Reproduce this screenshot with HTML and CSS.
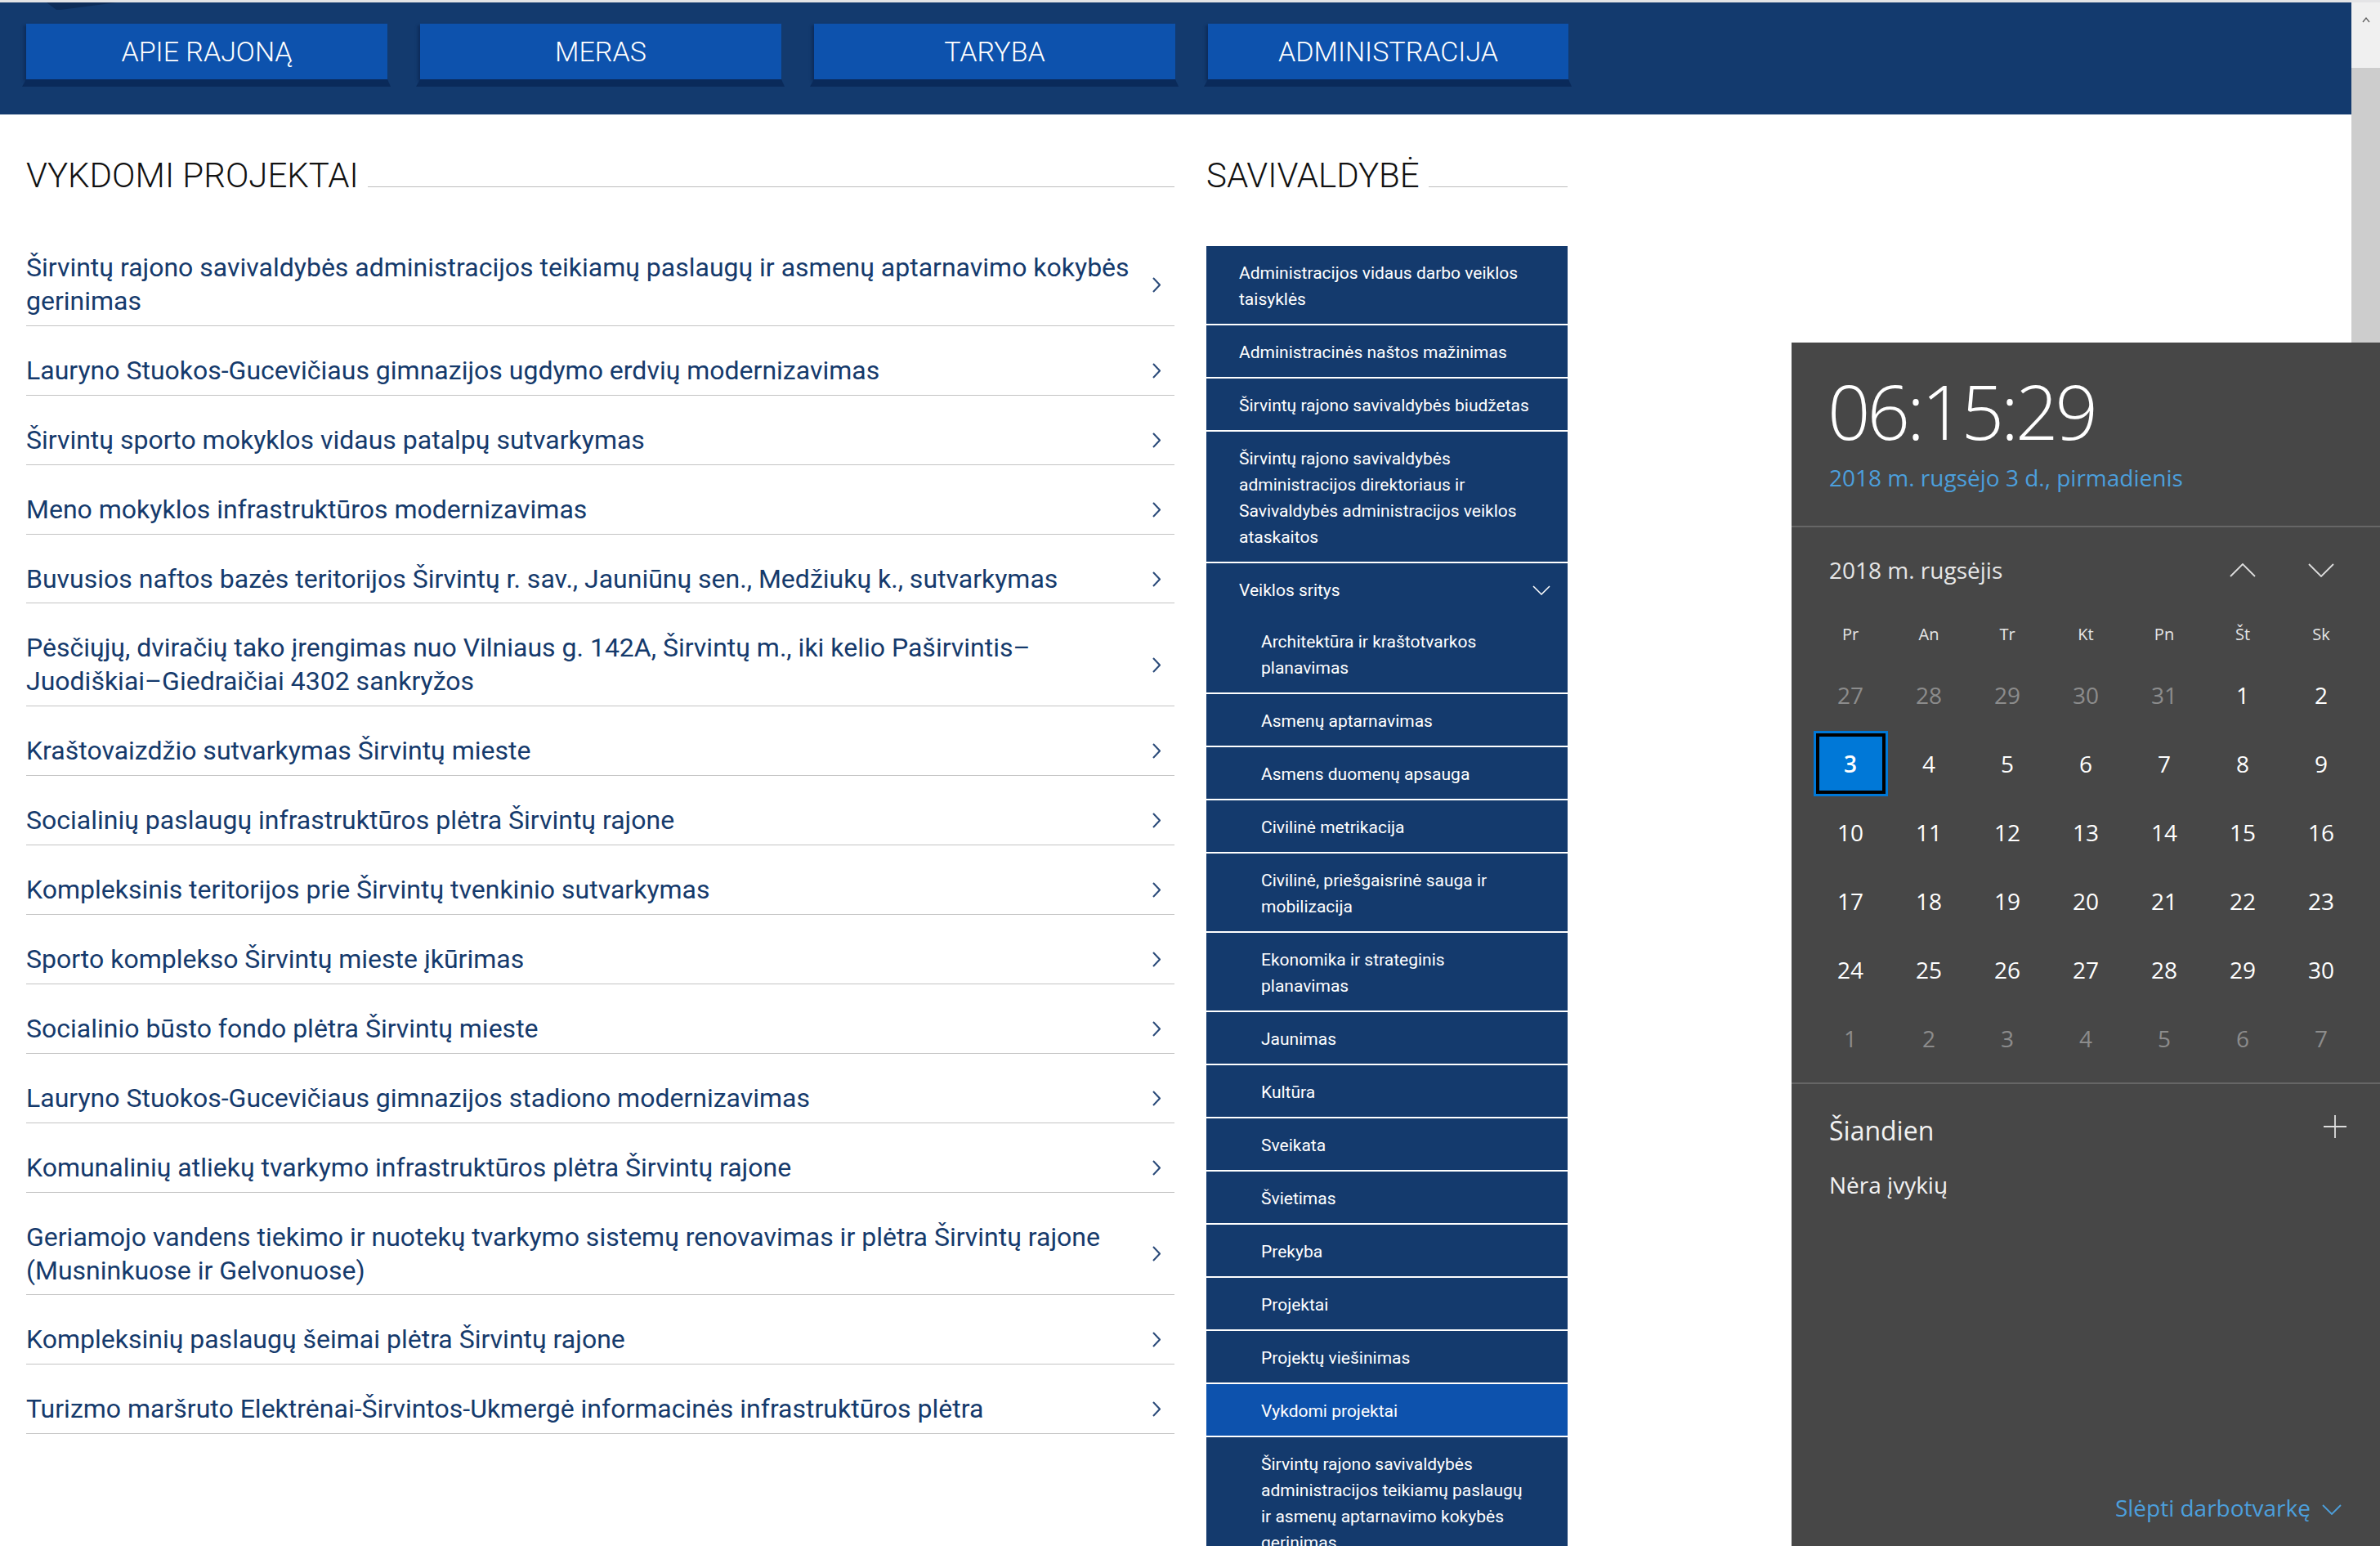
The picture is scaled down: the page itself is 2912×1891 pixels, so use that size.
FILE: index.html
```html
<!DOCTYPE html>
<html lang="lt">
<head>
<meta charset="utf-8">
<title>Vykdomi projektai</title>
<link rel="stylesheet" href="styles.css">
</head>
<body>
<div class="window">
  <div class="topstrip"></div>
  <div class="frame">
    <div class="page">
      <header class="navbar">
        <span class="logo-shadow"></span>
        <nav class="nav">
          <a class="navbtn" href="#">APIE RAJONĄ</a>
          <a class="navbtn" href="#">MERAS</a>
          <a class="navbtn" href="#">TARYBA</a>
          <a class="navbtn last" href="#">ADMINISTRACIJA</a>
        </nav>
      </header>
      <main class="content">
        <section class="projects">
          <h2 class="heading"><span>VYKDOMI PROJEKTAI</span><i class="rule"></i></h2>
          <ul class="plist">
            <li><a class="prow" href="#"><span class="ptext">Širvintų rajono savivaldybės administracijos teikiamų paslaugų ir asmenų aptarnavimo kokybės gerinimas</span><svg class="chev" viewBox="0 0 10 19"><polyline points="1,1 9,9.5 1,18"/></svg></a></li>
            <li><a class="prow" href="#"><span class="ptext">Lauryno Stuokos-Gucevičiaus gimnazijos ugdymo erdvių modernizavimas</span><svg class="chev" viewBox="0 0 10 19"><polyline points="1,1 9,9.5 1,18"/></svg></a></li>
            <li><a class="prow" href="#"><span class="ptext">Širvintų sporto mokyklos vidaus patalpų sutvarkymas</span><svg class="chev" viewBox="0 0 10 19"><polyline points="1,1 9,9.5 1,18"/></svg></a></li>
            <li><a class="prow" href="#"><span class="ptext">Meno mokyklos infrastruktūros modernizavimas</span><svg class="chev" viewBox="0 0 10 19"><polyline points="1,1 9,9.5 1,18"/></svg></a></li>
            <li><a class="prow" href="#"><span class="ptext">Buvusios naftos bazės teritorijos Širvintų r. sav., Jauniūnų sen., Medžiukų k., sutvarkymas</span><svg class="chev" viewBox="0 0 10 19"><polyline points="1,1 9,9.5 1,18"/></svg></a></li>
            <li><a class="prow" href="#"><span class="ptext">Pėsčiųjų, dviračių tako įrengimas nuo Vilniaus g. 142A, Širvintų m., iki kelio Paširvintis–Juodiškiai–Giedraičiai 4302 sankryžos</span><svg class="chev" viewBox="0 0 10 19"><polyline points="1,1 9,9.5 1,18"/></svg></a></li>
            <li><a class="prow" href="#"><span class="ptext">Kraštovaizdžio sutvarkymas Širvintų mieste</span><svg class="chev" viewBox="0 0 10 19"><polyline points="1,1 9,9.5 1,18"/></svg></a></li>
            <li><a class="prow" href="#"><span class="ptext">Socialinių paslaugų infrastruktūros plėtra Širvintų rajone</span><svg class="chev" viewBox="0 0 10 19"><polyline points="1,1 9,9.5 1,18"/></svg></a></li>
            <li><a class="prow" href="#"><span class="ptext">Kompleksinis teritorijos prie Širvintų tvenkinio sutvarkymas</span><svg class="chev" viewBox="0 0 10 19"><polyline points="1,1 9,9.5 1,18"/></svg></a></li>
            <li><a class="prow" href="#"><span class="ptext">Sporto komplekso Širvintų mieste įkūrimas</span><svg class="chev" viewBox="0 0 10 19"><polyline points="1,1 9,9.5 1,18"/></svg></a></li>
            <li><a class="prow" href="#"><span class="ptext">Socialinio būsto fondo plėtra Širvintų mieste</span><svg class="chev" viewBox="0 0 10 19"><polyline points="1,1 9,9.5 1,18"/></svg></a></li>
            <li><a class="prow" href="#"><span class="ptext">Lauryno Stuokos-Gucevičiaus gimnazijos stadiono modernizavimas</span><svg class="chev" viewBox="0 0 10 19"><polyline points="1,1 9,9.5 1,18"/></svg></a></li>
            <li><a class="prow" href="#"><span class="ptext">Komunalinių atliekų tvarkymo infrastruktūros plėtra Širvintų rajone</span><svg class="chev" viewBox="0 0 10 19"><polyline points="1,1 9,9.5 1,18"/></svg></a></li>
            <li><a class="prow" href="#"><span class="ptext">Geriamojo vandens tiekimo ir nuotekų tvarkymo sistemų renovavimas ir plėtra Širvintų rajone (Musninkuose ir Gelvonuose)</span><svg class="chev" viewBox="0 0 10 19"><polyline points="1,1 9,9.5 1,18"/></svg></a></li>
            <li><a class="prow" href="#"><span class="ptext">Kompleksinių paslaugų šeimai plėtra Širvintų rajone</span><svg class="chev" viewBox="0 0 10 19"><polyline points="1,1 9,9.5 1,18"/></svg></a></li>
            <li><a class="prow" href="#"><span class="ptext">Turizmo maršruto Elektrėnai-Širvintos-Ukmergė informacinės infrastruktūros plėtra</span><svg class="chev" viewBox="0 0 10 19"><polyline points="1,1 9,9.5 1,18"/></svg></a></li>
          </ul>
        </section>
        <aside class="side">
          <h2 class="heading"><span>SAVIVALDYBĖ</span><i class="rule"></i></h2>
          <ul class="smenu">
            <li><a class="sitem" href="#">Administracijos vidaus darbo veiklos taisyklės</a></li>
            <li><a class="sitem" href="#">Administracinės naštos mažinimas</a></li>
            <li><a class="sitem" href="#">Širvintų rajono savivaldybės biudžetas</a></li>
            <li><a class="sitem" href="#">Širvintų rajono savivaldybės administracijos direktoriaus ir Savivaldybės administracijos veiklos ataskaitos</a></li>
            <li>
              <a class="sitem parent" href="#"><span>Veiklos sritys</span><svg class="sdown" viewBox="0 0 22 12"><polyline points="1,1 11,11 21,1"/></svg></a>
              <ul class="submenu">
                <li><a class="sitem sub" href="#">Architektūra ir kraštotvarkos planavimas</a></li>
                <li><a class="sitem sub" href="#">Asmenų aptarnavimas</a></li>
                <li><a class="sitem sub" href="#">Asmens duomenų apsauga</a></li>
                <li><a class="sitem sub" href="#">Civilinė metrikacija</a></li>
                <li><a class="sitem sub" href="#">Civilinė, priešgaisrinė sauga ir mobilizacija</a></li>
                <li><a class="sitem sub" href="#">Ekonomika ir strateginis planavimas</a></li>
                <li><a class="sitem sub" href="#">Jaunimas</a></li>
                <li><a class="sitem sub" href="#">Kultūra</a></li>
                <li><a class="sitem sub" href="#">Sveikata</a></li>
                <li><a class="sitem sub" href="#">Švietimas</a></li>
                <li><a class="sitem sub" href="#">Prekyba</a></li>
                <li><a class="sitem sub" href="#">Projektai</a></li>
                <li><a class="sitem sub" href="#">Projektų viešinimas</a></li>
                <li><a class="sitem sub active" href="#">Vykdomi projektai</a></li>
                <li><a class="sitem sub" href="#">Širvintų rajono savivaldybės administracijos teikiamų paslaugų ir asmenų aptarnavimo kokybės gerinimas</a></li>
              </ul>
            </li>
          </ul>
        </aside>
      </main>
    </div>
    <div class="scrollbar">
      <div class="sb-up"><svg viewBox="0 0 10 7" class="sb-arrow"><polyline points="1,6 5,1 9,6"/></svg></div>
      <div class="sb-thumb"></div>
    </div>
  </div>
</div>

<div class="flyout">
  <div class="fly-head">
    <div class="time">06:15:29</div>
    <div class="date">2018 m. rugsėjo 3 d., pirmadienis</div>
  </div>
  <div class="fly-cal">
    <div class="month-row">
      <span class="month">2018 m. rugsėjis</span>
      <span class="arrows">
        <svg class="carrow" viewBox="0 0 32 17"><polyline points="1,16 16,1 31,16"/></svg>
        <svg class="carrow" viewBox="0 0 32 17"><polyline points="1,1 16,16 31,1"/></svg>
      </span>
    </div>
    <div class="grid">
      <span class="wd">Pr</span><span class="wd">An</span><span class="wd">Tr</span><span class="wd">Kt</span><span class="wd">Pn</span><span class="wd">Št</span><span class="wd">Sk</span>
      <span class="day muted">27</span><span class="day muted">28</span><span class="day muted">29</span><span class="day muted">30</span><span class="day muted">31</span><span class="day">1</span><span class="day">2</span>
      <span class="day"><b class="today">3</b></span><span class="day">4</span><span class="day">5</span><span class="day">6</span><span class="day">7</span><span class="day">8</span><span class="day">9</span>
      <span class="day">10</span><span class="day">11</span><span class="day">12</span><span class="day">13</span><span class="day">14</span><span class="day">15</span><span class="day">16</span>
      <span class="day">17</span><span class="day">18</span><span class="day">19</span><span class="day">20</span><span class="day">21</span><span class="day">22</span><span class="day">23</span>
      <span class="day">24</span><span class="day">25</span><span class="day">26</span><span class="day">27</span><span class="day">28</span><span class="day">29</span><span class="day">30</span>
      <span class="day muted">1</span><span class="day muted">2</span><span class="day muted">3</span><span class="day muted">4</span><span class="day muted">5</span><span class="day muted">6</span><span class="day muted">7</span>
    </div>
  </div>
  <div class="fly-agenda">
    <div class="today-row">
      <span class="today-label">Šiandien</span>
      <svg class="plus" viewBox="0 0 28 28"><path d="M14 0V28M0 14H28"/></svg>
    </div>
    <div class="noevents">Nėra įvykių</div>
    <div class="hide-agenda">
      <span>Slėpti darbotvarkę</span>
      <svg class="hide-chev" viewBox="0 0 24 13"><polyline points="1,1 12,12 23,1"/></svg>
    </div>
  </div>
</div>
</body>
</html>
```

FILE: styles.css
```css
html, body {
  margin: 0;
  padding: 0;
}
body {
  width: 2912px;
  height: 1891px;
  overflow: hidden;
  background: #ffffff;
  font-family: Roboto, "Noto Sans", "Liberation Sans", sans-serif;
  position: relative;
}
ul {
  list-style: none;
  margin: 0;
  padding: 0;
}
a {
  text-decoration: none;
}

.window {
  display: flex;
  flex-direction: column;
  height: 1891px;
}
.topstrip {
  flex: none;
  height: 3px;
  background: #e4e4e6;
}
.frame {
  flex: 1;
  display: flex;
  min-height: 0;
}
.page {
  flex: 1;
  min-width: 0;
  overflow: hidden;
}

/* scrollbar */
.scrollbar {
  flex: none;
  width: 35px;
  background: #f0f0f0;
  display: flex;
  flex-direction: column;
}
.sb-up {
  height: 42px;
  display: flex;
  align-items: center;
  justify-content: center;
}
.sb-arrow {
  width: 10px;
  height: 7px;
  fill: none;
  stroke: #606060;
  stroke-width: 1.3;
}
.sb-thumb {
  margin-top: 38px;
  height: 1200px;
  background: #cdcdcd;
}

/* navbar */
.navbar {
  position: relative;
  height: 137px;
  box-sizing: border-box;
  padding: 26px 0 0 32px;
  background: #133a6e;
}
.logo-shadow {
  position: absolute;
  left: 57px;
  top: 0;
  width: 86px;
  height: 9px;
  background: #0d2c58;
  clip-path: polygon(0 0, 100% 0, 20% 100%, 14% 100%);
}
.nav {
  display: flex;
  gap: 40px;
}
.navbtn {
  position: relative;
  width: 442px;
  height: 68px;
  background: #0d52ad;
  color: #ffffff;
  font-weight: 300;
  font-size: 34px;
  display: flex;
  align-items: center;
  justify-content: center;
  box-shadow: -3px 2px 3px rgba(6, 24, 60, 0.35);
}
.navbtn.last {
  width: 441px;
}
.navbtn::after {
  content: "";
  position: absolute;
  left: -5px;
  right: -4px;
  top: 100%;
  height: 9px;
  background: #0a2a5a;
  clip-path: polygon(5px 0, calc(100% - 4px) 0, 100% 100%, 0 100%);
}

/* content */
.content {
  display: flex;
  align-items: flex-start;
  gap: 39px;
  padding-left: 32px;
}
.projects {
  flex: none;
  width: 1405px;
}
.side {
  flex: none;
  width: 442px;
}
.heading {
  display: flex;
  align-items: baseline;
  gap: 11px;
  margin: 50px 0 33px;
  font-weight: 300;
  font-size: 42px;
  line-height: 50px;
  color: #111111;
}
.side .heading {
  margin-bottom: 61px;
}
.rule {
  flex: 1;
  border-bottom: 1px solid #bdbdbd;
}

/* project list */
.prow {
  display: flex;
  align-items: center;
  padding: 34px 0 8.9px;
  border-bottom: 1px solid #c4c4c4;
  color: #153a6c;
}
.ptext {
  flex: 1;
  padding-right: 15px;
  font-size: 32px;
  line-height: 41px;
}
.chev {
  flex: none;
  width: 10px;
  height: 19px;
  margin-right: 17px;
  fill: none;
  stroke: #2a4a79;
  stroke-width: 2;
}

/* side menu */
.smenu {
  background: #143a6d;
}
.sitem {
  display: block;
  padding: 17px 40px 14px;
  border-bottom: 2px solid #ffffff;
  color: #ffffff;
  font-size: 21px;
  line-height: 32px;
}
.sitem.parent {
  display: flex;
  align-items: center;
  justify-content: space-between;
  padding-right: 21px;
  border-bottom: none;
}
.sdown {
  width: 22px;
  height: 12px;
  fill: none;
  stroke: #ffffff;
  stroke-width: 1.5;
}
.sitem.sub {
  padding-left: 67px;
}
.sitem.active {
  background: #0d52ad;
}

/* calendar flyout */
.flyout {
  position: absolute;
  left: 2192px;
  top: 419px;
  width: 720px;
  height: 1472px;
  background: #474747;
  color: #ffffff;
  font-family: "Open Sans", "Noto Sans", sans-serif;
  display: flex;
  flex-direction: column;
}
.fly-head {
  flex: none;
  height: 224px;
  box-sizing: content-box;
  border-bottom: 2px solid #666666;
  padding-left: 44px;
}
.time {
  margin-top: 38px;
  font-weight: 300;
  font-size: 92px;
  line-height: 92px;
  letter-spacing: -4px;
}
.date {
  margin-top: 17px;
  margin-left: 2px;
  font-size: 28px;
  line-height: 36px;
  color: #4c9fdc;
}
.fly-cal {
  flex: none;
  height: 681px;
  box-sizing: border-box;
  border-bottom: 2px solid #666666;
}
.month-row {
  height: 104px;
  display: flex;
  align-items: center;
  justify-content: space-between;
  padding: 0 56px 0 46px;
}
.month {
  font-size: 28px;
  color: #e6e6e6;
}
.arrows {
  display: flex;
  gap: 64px;
}
.carrow {
  width: 32px;
  height: 17px;
  fill: none;
  stroke: #dddddd;
  stroke-width: 1.8;
}
.grid {
  display: grid;
  grid-template-columns: repeat(7, 96px);
  grid-template-rows: 59px repeat(6, 84px);
  padding-left: 24px;
}
.wd {
  display: flex;
  align-items: center;
  justify-content: center;
  padding-bottom: 6px;
  font-size: 20px;
  color: #e6e6e6;
}
.day {
  display: flex;
  align-items: center;
  justify-content: center;
  font-size: 28px;
  color: #ffffff;
}
.day.muted {
  color: #8c8c8c;
}
.today {
  width: 91px;
  height: 80px;
  display: flex;
  align-items: center;
  justify-content: center;
  font-weight: 600;
  background: #0078d7;
  box-shadow: inset 0 0 0 3px #0078d7, inset 0 0 0 7px #000000;
}
.fly-agenda {
  flex: 1;
  display: flex;
  flex-direction: column;
  padding: 35px 41px 27px 46px;
}
.today-row {
  display: flex;
  align-items: center;
  justify-content: space-between;
}
.today-label {
  font-size: 32px;
  line-height: 44px;
  color: #f2f2f2;
}
.plus {
  width: 28px;
  height: 28px;
  margin-top: -10px;
  fill: none;
  stroke: #dddddd;
  stroke-width: 1.8;
}
.noevents {
  margin-top: 24px;
  font-size: 28px;
  line-height: 40px;
  color: #f2f2f2;
}
.hide-agenda {
  margin-top: auto;
  align-self: flex-end;
  margin-right: 6px;
  display: flex;
  align-items: center;
  gap: 14px;
  font-size: 28px;
  line-height: 40px;
  color: #4c9fdc;
}
.hide-chev {
  width: 24px;
  height: 13px;
  margin-top: 4px;
  fill: none;
  stroke: #4c9fdc;
  stroke-width: 1.8;
}
```
